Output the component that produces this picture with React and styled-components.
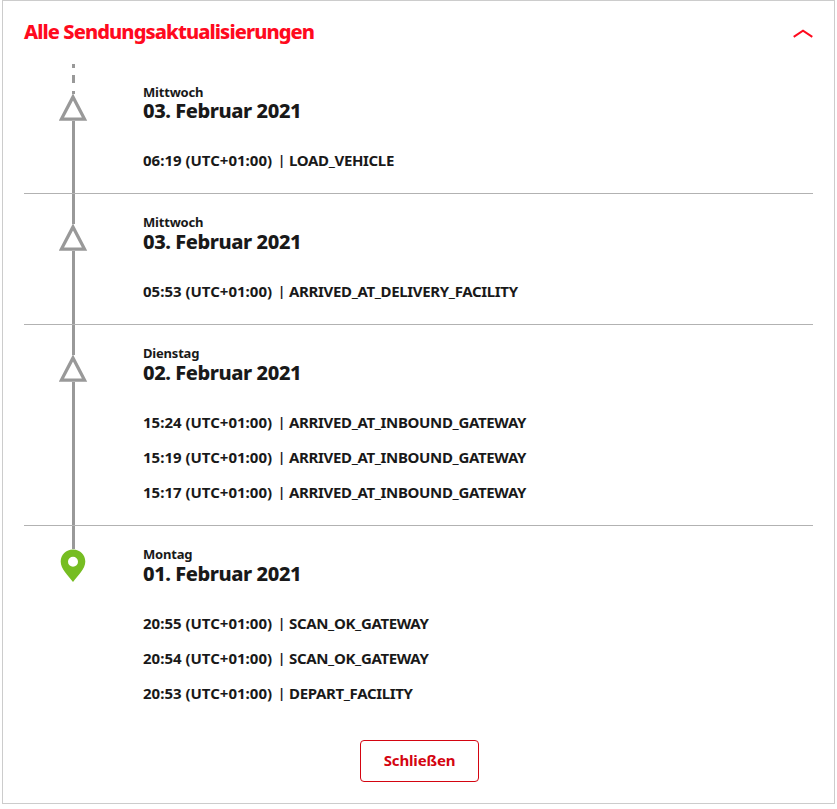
import React from 'react';
import styled, { createGlobalStyle } from 'styled-components';

const GlobalStyle = createGlobalStyle`
  * {
    box-sizing: border-box;
  }

  body {
    margin: 0;
    background-color: #fff;
    color: #191919;
    font-family: "Noto Sans", "Open Sans", sans-serif;
  }
`;

const Card = styled.section`
  width: 833px;
  height: 804px;
  margin-left: 2px;
  padding: 0 21px;
  border: 1px solid #ccc;
`;

const Header = styled.header`
  display: flex;
  justify-content: space-between;
  height: 62px;
`;

const Title = styled.h2`
  margin: 16px 0 0;
  color: #ff0a1e;
  font-size: 20px;
  font-weight: 800;
  line-height: 30px;
  letter-spacing: -0.9px;
  white-space: nowrap;
`;

const Toggle = styled.button`
  width: 20px;
  height: 10px;
  margin-top: 28px;
  padding: 0;
  border: none;
  background: none;

  svg {
    display: block;
  }
`;

const Day = styled.article`
  display: flex;
  border-bottom: ${({ $last }) => ($last ? 'none' : '1px solid #b2b2b2')};
`;

const Track = styled.div`
  display: flex;
  flex-direction: column;
  align-items: center;
  width: 99px;
  margin-right: 20px;

  svg {
    display: block;
    flex: none;
  }
`;

const Line = styled.div`
  width: 3px;
  height: ${({ $height }) => ($height ? `${$height}px` : 'auto')};
  flex: ${({ $height }) => ($height ? 'none' : '1')};
  background-color: #999;
`;

const Content = styled.div`
  padding: ${({ $first }) => ($first ? '20px' : '19px')} 0 15px;
`;

const Weekday = styled.div`
  margin-bottom: ${({ $first }) => ($first ? '0' : '1px')};
  font-size: 13px;
  font-weight: 700;
  line-height: 18px;
  letter-spacing: -0.2px;
`;

const DateTitle = styled.h3`
  margin: 0 0 22px;
  font-size: 20px;
  font-weight: 800;
  line-height: 20px;
  letter-spacing: -0.42px;
`;

const Event = styled.div`
  display: flex;
  height: 35px;
  font-size: 15px;
  font-weight: 700;
  line-height: 35px;
  white-space: nowrap;
`;

const Time = styled.span`
  width: 135px;
`;

const Divider = styled.span`
  width: 11px;
  font-size: 13px;
`;

const Status = styled.span`
  letter-spacing: -0.34px;
`;

const Footer = styled.footer`
  display: flex;
  justify-content: center;
  padding: 14px 0 0 2px;
`;

const CloseButton = styled.button`
  width: 119px;
  height: 42px;
  padding: 0 0 2px;
  border: 1px solid #d40511;
  border-radius: 4px;
  background-color: #fff;
  color: #d40511;
  font-family: inherit;
  font-size: 15px;
  font-weight: 700;
  line-height: 38px;
  letter-spacing: -0.15px;
`;

const days = [
  {
    weekday: 'Mittwoch',
    date: '03. Februar 2021',
    events: [['06:19', 'LOAD_VEHICLE']],
  },
  {
    weekday: 'Mittwoch',
    date: '03. Februar 2021',
    events: [['05:53', 'ARRIVED_AT_DELIVERY_FACILITY']],
  },
  {
    weekday: 'Dienstag',
    date: '02. Februar 2021',
    events: [
      ['15:24', 'ARRIVED_AT_INBOUND_GATEWAY'],
      ['15:19', 'ARRIVED_AT_INBOUND_GATEWAY'],
      ['15:17', 'ARRIVED_AT_INBOUND_GATEWAY'],
    ],
  },
  {
    weekday: 'Montag',
    date: '01. Februar 2021',
    events: [
      ['20:55', 'SCAN_OK_GATEWAY'],
      ['20:54', 'SCAN_OK_GATEWAY'],
      ['20:53', 'DEPART_FACILITY'],
    ],
  },
];

const ChevronUp = () => (
  <svg width="20" height="10" viewBox="0 0 20 10">
    <path d="M0.7 7.8 L10 1.6 L19.3 7.8" fill="none" stroke="#ff0a1e" strokeWidth="2" />
  </svg>
);

const Dashes = () => (
  <svg width="3" height="31" viewBox="0 0 3 31" fill="#999">
    <rect y="1" width="3" height="4" />
    <rect y="12" width="3" height="8" />
    <rect y="28" width="3" height="3" />
  </svg>
);

const Triangle = () => (
  <svg width="29" height="27" viewBox="0 0 29 27">
    <path d="M14 2.9 L25.5 25.1 H2.4 Z" fill="#fff" stroke="#999" strokeWidth="3.3" />
  </svg>
);

const Pin = () => (
  <svg width="27" height="33" viewBox="0 0 27 33">
    <path
      d="M13 0.5 C6 0.5 0.7 5.8 0.7 12.5 C0.7 20 8 26 13 33 C18 26 25.3 20 25.3 12.5 C25.3 5.8 20 0.5 13 0.5 Z M13 7.7 A5 5 0 1 1 13 17.7 A5 5 0 1 1 13 7.7 Z"
      fill="#76bd22"
      fillRule="evenodd"
    />
  </svg>
);

const DayMarker = ({ first, last }) => (
  <Track>
    {first ? <Dashes /> : <Line $height={last ? 23 : 30} />}
    {last ? <Pin /> : <Triangle />}
    {!last && <Line />}
  </Track>
);

const App = () => {
  return (
    <>
      <GlobalStyle />
      <Card>
        <Header>
          <Title>Alle Sendungsaktualisierungen</Title>
          <Toggle aria-label="Zuklappen">
            <ChevronUp />
          </Toggle>
        </Header>

        {/* Shipment history */}
        {days.map((day, index) => {
          const first = index === 0;
          const last = index === days.length - 1;
          return (
            <Day key={index} $last={last}>
              <DayMarker first={first} last={last} />
              <Content $first={first}>
                <Weekday $first={first}>{day.weekday}</Weekday>
                <DateTitle>{day.date}</DateTitle>
                {day.events.map(([time, status]) => (
                  <Event key={time}>
                    <Time>{time} (UTC+01:00)</Time>
                    <Divider>|</Divider>
                    <Status>{status}</Status>
                  </Event>
                ))}
              </Content>
            </Day>
          );
        })}

        <Footer>
          <CloseButton>Schließen</CloseButton>
        </Footer>
      </Card>
    </>
  );
};

export default App;
